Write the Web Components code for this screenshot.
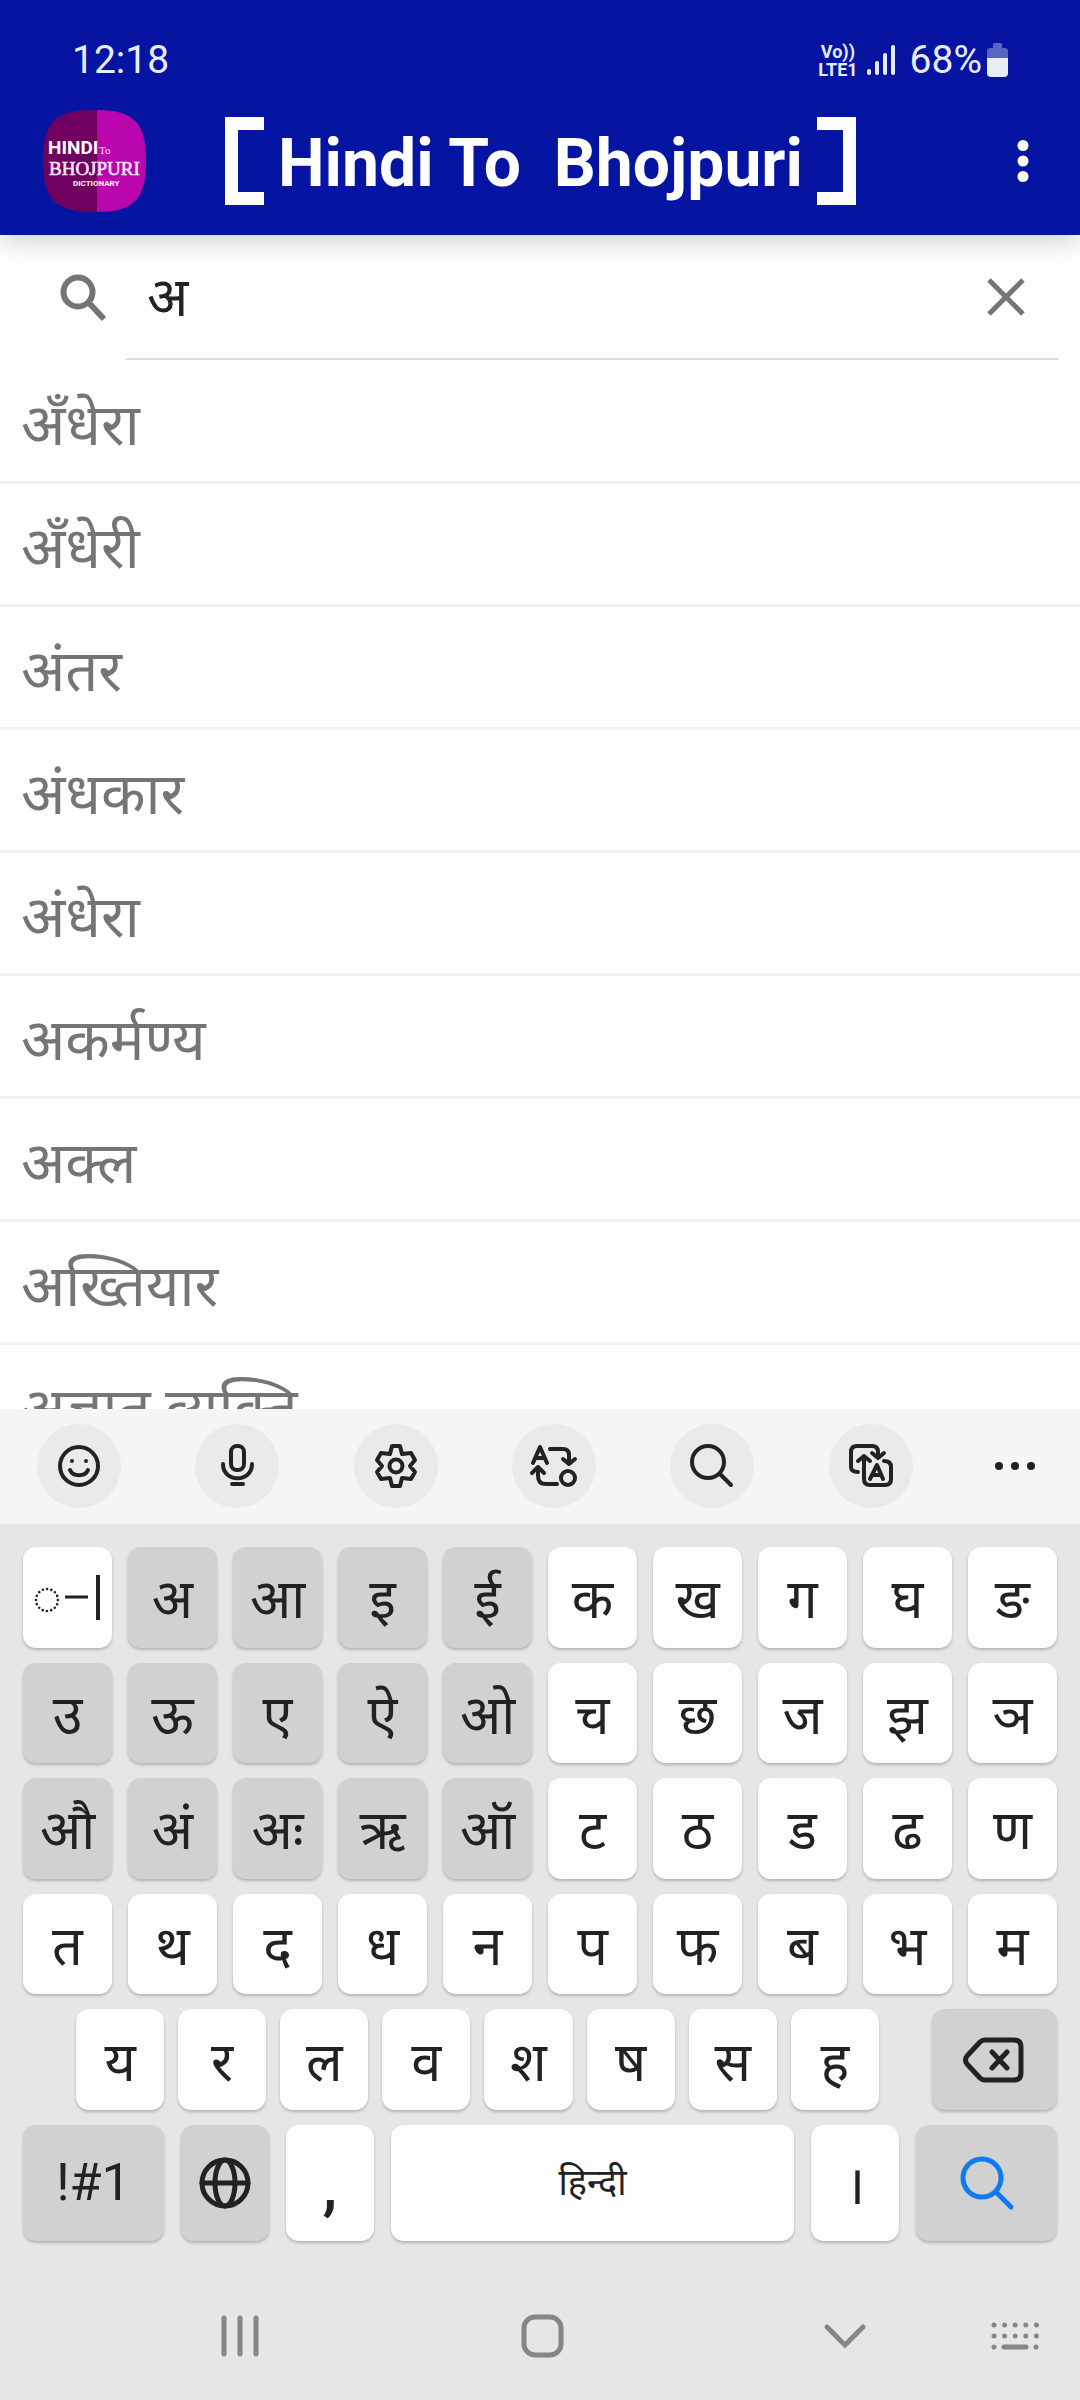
<!DOCTYPE html>
<html lang="hi">
<head>
<meta charset="utf-8">
<meta name="viewport" content="width=device-width, initial-scale=1">
<title>Hindi To Bhojpuri</title>
<style>
    html, body {
        margin: 0;
        height: 100%;
    }
    body {
        font-family: Roboto, "Noto Sans Devanagari", "Noto Sans", sans-serif;
        background: #fefefe;
        color: #222;
    }
</style>
</head>
<body>
<dictionary-app></dictionary-app>

<script>
const icons = {
    search: '<circle cx="-4" cy="-4" r="16"/><path d="M8 8L19 19"/>',
    smile: '<circle r="19"/><path d="M-9 4C-6 11 6 11 9 4"/><circle class="dot" cx="-7" cy="-5" r="2"/><circle class="dot" cx="7" cy="-5" r="2"/>',
    mic: '<rect x="-6" y="-20" width="13" height="24" rx="6"/><path d="M-14 -2C-14 17 15 17 15 -2M-5 18H6"/>',
    gear: '<path d="M-4 -20H4L6 -12L15 -13L19 -6L14 0L19 6L15 13L6 12L4 20H-4L-6 12L-15 13L-19 6L-14 0L-19 -6L-15 -13L-6 -12Z"/><circle r="6.5"/>',
    textSwap: '<path d="M-21 -3L-14 -19L-7 -3M-18 -8H-10M-4 -17H9Q15 -17 15 -11V-2M9 -7L15 -2L21 -7M3 18H-8Q-16 18 -16 10V1M-22 7L-16 1L-10 7"/><circle cx="14" cy="12" r="7"/>',
    translate: '<path d="M-1 13L6 -1L12 13M2 9H10M13 -5Q20 -5 20 1V13Q20 19 14 19H-1Q-7 19 -7 13V-10M-13 -5L-7 -10L-1 -5M-13 6Q-20 6 -20 1V-14Q-20 -20 -14 -20H1Q7 -20 7 -14V-8M1 -13L7 -8L13 -13"/>',
    more: '<circle class="dot" cx="-16" r="4"/><circle class="dot" r="4"/><circle class="dot" cx="16" r="4"/>',
    kebab: '<circle class="dot" cy="-15.5" r="5.5"/><circle class="dot" r="5.5"/><circle class="dot" cy="15.5" r="5.5"/>',
    lens: '<circle cx="-6" cy="-6" r="14.5"/><path d="M5 5L20 21" stroke-linecap="butt"/>',
    close: '<path d="M-17 -17L17 17M17 -17L-17 17" stroke-linecap="butt"/>',
    matra: '<circle cx="-21" cy="3" r="11" stroke-width="2.6" stroke-dasharray="0 4.3"/><path d="M-3 0H20" stroke-width="3" stroke-linecap="butt"/><path d="M30 -22V23" stroke-width="4" stroke-linecap="butt"/>',
    erase: '<path d="M-9 -20H20Q27 -20 27 -13V13Q27 20 20 20H-9Q-12 20 -14 18L-27 4Q-30 0 -27 -4L-14 -18Q-12 -20 -9 -20ZM-2 -8L13 8M13 -8L-2 8"/>',
    globe: '<circle r="23"/><ellipse rx="10" ry="23"/><path d="M-23 0H23"/>',
    go: '<circle cx="-5" cy="-5" r="19"/><path d="M9 9L24 24"/>',
    recent: '<path d="M-16 -18V18M0 -18V18M16 -18V18"/>',
    home: '<rect x="-18" y="-19" width="37" height="38" rx="11"/>',
    hide: '<path d="M-18 -9L0 9L18 -9" stroke-linejoin="miter"/>',
    keyboard: '<path d="M-21 -11H22M-21 0H22" stroke-dasharray="0 10.6"/><path d="M-21 11H-21M-11 11H11M21 11H21"/>'
};

// all icons are drawn around the origin of their own square
function icon(name, size = 48, stroke = 4) {
    const half = size / 2;
    return `<svg width="${size}" height="${size}" viewBox="${-half} ${-half} ${size} ${size}" fill="none" stroke="currentColor"
        stroke-width="${stroke}" stroke-linecap="round" stroke-linejoin="round" aria-hidden="true">${icons[name]}</svg>`;
}

const baseStyle = `
    * { box-sizing: border-box; }
    svg { display: block; overflow: visible; }
    .dot { fill: currentColor; stroke: none; }
    button {
        display: flex;
        align-items: center;
        justify-content: center;
        margin: 0;
        padding: 0;
        border: none;
        background: none;
        color: inherit;
        font: inherit;
        cursor: pointer;
    }
`;

class BaseElement extends HTMLElement {
    constructor() {
        super();
        this.attachShadow({ mode: 'open' });
    }

    connectedCallback() {
        this.shadowRoot.innerHTML = `<style>${baseStyle}</style>${this.template()}`;
        this.setupEventListeners();
    }

    setupEventListeners() {}
}

class StatusBar extends BaseElement {
    template() {
        return `
            <style>
                :host {
                    display: flex;
                    align-items: center;
                    justify-content: space-between;
                    height: 100px;
                    padding: 20px 72px 0;
                    color: #e8ecff;
                    font-size: 39px;
                    line-height: 48px;
                }
                .right { display: flex; align-items: center; }
                .volte {
                    display: grid;
                    margin-right: 9px;
                    padding-top: 2px;
                    font-size: 18px;
                    font-weight: 700;
                    line-height: 18px;
                    text-align: center;
                }
                .signal { margin-right: 15px; }
                .battery { margin-left: 5px; }
            </style>
            <time>12:18</time>
            <div class="right">
                <div class="volte"><span>Vo))</span><span>LTE1</span></div>
                <svg class="signal" width="28" height="32" fill="none" stroke="currentColor" stroke-width="4" stroke-linecap="round">
                    <path d="M2 27V29M10 19V29M18 11V29M26 3V29"/>
                </svg>
                <span>68%</span>
                <svg class="battery" width="21" height="34">
                    <path d="M6 2Q6 0 8 0H13Q15 0 15 2V5H18Q21 5 21 8V15H0V8Q0 5 3 5H6Z" fill="#5a64c4"/>
                    <path d="M0 15H21V30Q21 34 17 34H4Q0 34 0 30Z" fill="#e8ecf8"/>
                </svg>
            </div>
        `;
    }
}

class AppLogo extends BaseElement {
    template() {
        return `
            <style>
                :host { display: block; }
                text { fill: #fff; font-family: Roboto, sans-serif; font-weight: 700; }
                .serif { fill: #fbe4fb; font-family: "Liberation Serif", serif; font-weight: 400; }
            </style>
            <svg width="103" height="102" viewBox="0 0 103 102" role="img" aria-label="Hindi To Bhojpuri Dictionary">
                <defs>
                    <linearGradient id="halves">
                        <stop offset=".52" stop-color="#70005f"/>
                        <stop offset=".52" stop-color="#b805ac"/>
                    </linearGradient>
                </defs>
                <path d="M52 0C91 0 103 12 103 51S91 102 52 102S0 90 0 51S12 0 52 0Z" fill="url(#halves)"/>
                <text x="5" y="44" font-size="19">HINDI</text>
                <text x="56" y="44" font-size="11" class="serif">To</text>
                <text x="6" y="65" font-size="19" class="serif" stroke="#fbe4fb" stroke-width=".6">BHOJPURI</text>
                <text x="30" y="76" font-size="8">DICTIONARY</text>
            </svg>
        `;
    }
}

class AppHeader extends BaseElement {
    template() {
        return `
            <style>
                :host {
                    display: block;
                    position: relative;
                    z-index: 1;
                    background: #0515a2;
                    box-shadow: 0 4px 28px rgba(0, 0, 0, .2);
                    color: #fff;
                }
                .bar {
                    display: grid;
                    grid-template-columns: 182px 1fr 182px;
                    align-items: center;
                    height: 135px;
                    padding: 0 43px 14px;
                }
                .title {
                    display: flex;
                    align-items: center;
                    justify-content: center;
                    gap: 14px;
                }
                h1 {
                    margin: 0;
                    padding-top: 6px;
                    font-size: 66px;
                    line-height: 82px;
                    white-space: pre;
                }
                .bracket {
                    width: 39px;
                    height: 88px;
                    border: 13px solid #fff;
                }
                .open { border-right: none; }
                .close { border-left: none; }
                .menu { justify-self: end; width: 30px; height: 60px; }
            </style>
            <status-bar></status-bar>
            <div class="bar">
                <app-logo></app-logo>
                <div class="title">
                    <span class="bracket open"></span>
                    <h1>Hindi To  Bhojpuri</h1>
                    <span class="bracket close"></span>
                </div>
                <button class="menu" aria-label="Menu">${icon('kebab')}</button>
            </div>
        `;
    }
}

class SearchBar extends BaseElement {
    template() {
        return `
            <style>
                :host {
                    display: flex;
                    height: 125px;
                    padding-right: 21px;
                }
                label {
                    flex: none;
                    display: flex;
                    align-items: center;
                    justify-content: center;
                    width: 126px;
                    padding-left: 42px;
                    color: #757575;
                }
                .field {
                    flex: 1;
                    display: flex;
                    border-bottom: 2px solid #dcdcdc;
                }
                input {
                    flex: 1;
                    min-width: 0;
                    margin: 0;
                    padding: 10px 21px 0;
                    border: none;
                    outline: none;
                    background: none;
                    color: #222;
                    font: inherit;
                    font-size: 54px;
                }
                button { width: 106px; color: #757575; }
            </style>
            <label for="query" aria-label="Search">${icon('lens', 48, 6)}</label>
            <div class="field">
                <input id="query" type="text" value="अ">
                <button aria-label="Clear">${icon('close', 48, 5)}</button>
            </div>
        `;
    }

    setupEventListeners() {
        const input = this.shadowRoot.getElementById('query');
        this.shadowRoot.querySelector('button').addEventListener('click', () => {
            input.value = '';
        });
    }
}

class WordList extends BaseElement {
    template() {
        const words = ['अँधेरा', 'अँधेरी', 'अंतर', 'अंधकार', 'अंधेरा', 'अकर्मण्य', 'अक्ल', 'अख्तियार', 'अज्ञात व्यक्ति'];
        return `
            <style>
                :host { display: block; overflow: hidden; }
                ul { margin: 1px 0 0; padding: 0; list-style: none; }
                li {
                    height: 123px;
                    padding: 4px 21px 0;
                    border-bottom: 3px solid #f2f2f2;
                    color: #757575;
                    font-size: 58px;
                    line-height: 120px;
                }
            </style>
            <ul>${words.map(word => `<li>${word}</li>`).join('')}</ul>
        `;
    }
}

class ToolStrip extends BaseElement {
    template() {
        const tools = [
            ['smile', 'Emoji'], ['mic', 'Voice input'], ['gear', 'Settings'],
            ['textSwap', 'Text'], ['search', 'Search'], ['translate', 'Translate']
        ];
        return `
            <style>
                :host {
                    display: flex;
                    align-items: center;
                    justify-content: space-between;
                    height: 115px;
                    padding: 0 37px 2px;
                    background: #f5f5f5;
                }
                .round {
                    width: 84px;
                    height: 84px;
                    border-radius: 50%;
                    background: #eaeaea;
                }
                .more { width: 56px; height: 84px; }
            </style>
            ${tools.map(([name, label]) => `<button class="round" aria-label="${label}">${icon(name)}</button>`).join('')}
            <button class="more" aria-label="More">${icon('more')}</button>
        `;
    }
}

class KeyCap extends BaseElement {
    template() {
        return `
            <style>
                :host { display: flex; --key: #fdfdfd; font-size: 54px; }
                :host([dark]) { --key: #d1d1d1; }
                :host([accent]) { color: #0f7bf0; }
                :host([small]) { font-size: 36px; }
                :host([letter]) button { padding-top: 6px; }
                button {
                    flex: 1;
                    min-width: 0;
                    border-radius: 13px;
                    background: var(--key);
                    box-shadow: 0 2px 3px rgba(0, 0, 0, .22);
                    line-height: 72px;
                    white-space: nowrap;
                }
            </style>
            <button aria-label="${this.getAttribute('label') || this.textContent.trim()}"><slot></slot></button>
        `;
    }
}

class KeyBoard extends BaseElement {
    row(letters, darkCount = 0) {
        return letters.split(' ').map((letter, i) => `<key-cap letter${i < darkCount ? ' dark' : ''}>${letter}</key-cap>`).join('');
    }

    template() {
        return `
            <style>
                :host {
                    display: grid;
                    grid-template-rows: repeat(5, 1fr) 116px;
                    gap: 15px;
                    height: 740px;
                    padding: 23px;
                }
                .row {
                    display: grid;
                    grid-template-columns: repeat(10, 1fr);
                    gap: 16px;
                }
                .short {
                    grid-template-columns: repeat(8, 88fr) 164fr;
                    gap: 14px;
                    padding-left: 53px;
                }
                .erase { margin-left: 39px; }
                .bottom {
                    grid-template-columns: 141fr 88fr 88fr 403fr 88fr 141fr;
                    gap: 17px;
                }
                .symbols { font-size: 52px; }
                .comma { font-size: 66px; font-weight: 500; }
            </style>
            <div class="row"><key-cap label="Matra">${icon('matra', 84)}</key-cap>${this.row('अ आ इ ई क ख ग घ ङ', 4)}</div>
            <div class="row">${this.row('उ ऊ ए ऐ ओ च छ ज झ ञ', 5)}</div>
            <div class="row">${this.row('औ अं अः ऋ ऑ ट ठ ड ढ ण', 5)}</div>
            <div class="row">${this.row('त थ द ध न प फ ब भ म')}</div>
            <div class="row short">${this.row('य र ल व श ष स ह')}<key-cap class="erase" dark label="Backspace">${icon('erase', 64, 5)}</key-cap></div>
            <div class="row bottom">
                <key-cap class="symbols" dark>!#1</key-cap>
                <key-cap dark label="Language">${icon('globe', 56, 5)}</key-cap>
                <key-cap class="comma" letter>,</key-cap>
                <key-cap small>हिन्दी</key-cap>
                <key-cap letter>।</key-cap>
                <key-cap dark accent label="Search">${icon('go', 56, 5)}</key-cap>
            </div>
        `;
    }
}

class NavBar extends BaseElement {
    template() {
        return `
            <style>
                :host {
                    display: grid;
                    grid-template-columns: 240fr 302fr 303fr 170fr 65fr;
                    align-items: center;
                    height: 136px;
                    padding-top: 8px;
                    color: #868686;
                }
                button {
                    justify-self: end;
                    width: 48px;
                    height: 64px;
                    margin-right: -24px;
                }
            </style>
            <button aria-label="Recent apps">${icon('recent', 48, 5)}</button>
            <button aria-label="Home">${icon('home', 48, 5)}</button>
            <button aria-label="Hide keyboard">${icon('hide', 48, 5)}</button>
            <button aria-label="Choose keyboard">${icon('keyboard', 48, 5)}</button>
        `;
    }
}

class DictionaryApp extends BaseElement {
    template() {
        return `
            <style>
                :host {
                    display: flex;
                    flex-direction: column;
                    height: 100%;
                }
                word-list { flex: 1; min-height: 0; }
                .panel { background: #e6e6e6; }
            </style>
            <app-header></app-header>
            <search-bar></search-bar>
            <word-list></word-list>
            <div class="panel">
                <tool-strip></tool-strip>
                <key-board></key-board>
                <nav-bar></nav-bar>
            </div>
        `;
    }
}

customElements.define('status-bar', StatusBar);
customElements.define('app-logo', AppLogo);
customElements.define('app-header', AppHeader);
customElements.define('search-bar', SearchBar);
customElements.define('word-list', WordList);
customElements.define('tool-strip', ToolStrip);
customElements.define('key-cap', KeyCap);
customElements.define('key-board', KeyBoard);
customElements.define('nav-bar', NavBar);
customElements.define('dictionary-app', DictionaryApp);
</script>
</body>
</html>
